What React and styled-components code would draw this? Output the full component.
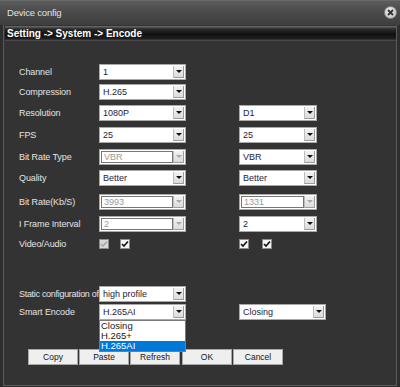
import React from 'react';
import styled, { createGlobalStyle } from 'styled-components';

const GlobalStyle = createGlobalStyle`
    html, body {
        margin: 0;
        padding: 0;
        background: #2e2e2e;
    }
    * {
        box-sizing: border-box;
    }
`;

const font = `"Liberation Sans", Arial, sans-serif`;

const Window = styled.div`
    width: 400px;
    height: 387px;
    display: flex;
    flex-direction: column;
    background: #2e2e2e;
    font-family: ${font};
    font-size: 9px;
`;

const TitleBar = styled.div`
    height: 25px;
    flex: none;
    display: flex;
    align-items: center;
    justify-content: space-between;
    padding: 0 3px 1px 7px;
    background: linear-gradient(#5c5c5c, #4a4a4a 45%, #3e3e3e);
    border-top: 1px solid #6a6a6a;
    color: #e2e2e2;
    font-size: 9.5px;
    letter-spacing: -0.2px;
`;

const CloseButton = styled.div`
    width: 13px;
    height: 13px;
    border-radius: 50%;
    background: radial-gradient(circle at 40% 35%, #f0f0f0, #b8b8b8);
    border: 1px solid #8a8a8a;
    display: flex;
    align-items: center;
    justify-content: center;
`;

const Frame = styled.div`
    flex: 1;
    margin: 0 3px 1px 3px;
    border: 1px solid #5a5a5a;
    border-top: none;
    background: #333333;
    display: flex;
    flex-direction: column;
`;

const Crumb = styled.div`
    height: 15px;
    margin: 1px 0 0 1px;
    padding-left: 2px;
    display: flex;
    align-items: center;
    background: linear-gradient(#6e6e6e, #2a2a2a 20%, #101010 55%, #1e1e1e 85%, #555555);
    color: #ffffff;
    font-weight: bold;
    font-size: 10px;
`;

const Form = styled.div`
    padding: 23px 0 0 15px;
    display: flex;
    flex-direction: column;
`;

const Row = styled.div`
    display: grid;
    grid-template-columns: 80px 140px auto;
    align-items: center;
    height: ${(p) => p.$h || 16}px;
    margin-top: ${(p) => p.$gap || 0}px;
    position: relative;
`;

const Label = styled.div`
    color: #e4e4e4;
    white-space: nowrap;
    letter-spacing: ${(p) => (p.$tight ? -0.3 : -0.1)}px;
`;

const Cell = styled.div`
    display: flex;
    align-items: center;
    gap: ${(p) => p.$gap || 0}px;
`;

const SelectBox = styled.div`
    width: ${(p) => p.$w}px;
    height: 16px;
    display: flex;
    align-items: stretch;
    background: #ffffff;
    border: 1px solid #a9a9a9;
    padding: 1px;
`;

const SelectText = styled.div`
    flex: 1;
    padding-left: 2px;
    line-height: ${(p) => (p.$disabled ? 10 : 12)}px;
    font-size: 9px;
    color: ${(p) => (p.$disabled ? '#9a9a9a' : '#1c1c3a')};
    border: ${(p) => (p.$disabled ? '1px solid #767676' : 'none')};
    white-space: nowrap;
    overflow: hidden;
`;

const ArrowButton = styled.div`
    width: 11px;
    flex: none;
    display: flex;
    align-items: center;
    justify-content: center;
    background: linear-gradient(#f2f2f2, #dcdcdc);
    border-left: 1px solid #bdbdbd;
    border-bottom: 1px solid #9c9c9c;
    border-right: 1px solid #9c9c9c;
`;

const Arrow = styled.div`
    width: 0;
    height: 0;
    border-left: 3px solid transparent;
    border-right: 3px solid transparent;
    border-top: 3px solid ${(p) => (p.$disabled ? '#a8a8a8' : '#111111')};
`;

const CheckBox = styled.div`
    width: 10px;
    height: 10px;
    background: ${(p) => (p.$disabled ? '#d8d8d8' : '#f4f4f4')};
    border: 1px solid #8c8c8c;
    display: flex;
    align-items: center;
    justify-content: center;
`;

const OptionList = styled.div`
    position: absolute;
    left: 80px;
    top: 16px;
    width: 87px;
    background: #ffffff;
    border: 1px solid #7a7a7a;
    z-index: 2;
    display: flex;
    flex-direction: column;
`;

const Option = styled.div`
    height: 10px;
    line-height: 10px;
    padding-left: 1px;
    font-size: 9.5px;
    color: ${(p) => (p.$active ? '#ffffff' : '#1a1a1a')};
    background: ${(p) => (p.$active ? '#0078d7' : 'transparent')};
`;

const ButtonBar = styled.div`
    display: flex;
    gap: 1px;
    margin: 29px 0 0 9px;
`;

const Button = styled.div`
    width: 50px;
    height: 16px;
    display: flex;
    align-items: center;
    justify-content: center;
    background: #efefef;
    border: 1px solid #a8a8a8;
    color: #151515;
    font-size: 8.5px;
    margin-left: ${(p) => p.$gap || 0}px;
`;

const Select = ({ value, w = 87, disabled }) => (
    <SelectBox $w={w}>
        <SelectText $disabled={disabled}>{value}</SelectText>
        <ArrowButton>
            <Arrow $disabled={disabled} />
        </ArrowButton>
    </SelectBox>
);

const Check = ({ disabled }) => (
    <CheckBox $disabled={disabled}>
        <svg width="8" height="8" viewBox="0 0 8 8">
            <path
                d="M1 4 L3 6 L7 1.5"
                fill="none"
                stroke={disabled ? '#a8a8a8' : '#111'}
                strokeWidth="1.6"
            />
        </svg>
    </CheckBox>
);

const rows = [
    { label: 'Channel', left: '1', gap: 0 },
    { label: 'Compression', left: 'H.265', gap: 4 },
    { label: 'Resolution', left: '1080P', right: 'D1', gap: 5 },
    { label: 'FPS', left: '25', right: '25', gap: 6 },
    { label: 'Bit Rate Type', left: 'VBR', right: 'VBR', leftDisabled: true, gap: 6 },
    { label: 'Quality', left: 'Better', right: 'Better', gap: 5 },
    { label: 'Bit Rate(Kb/S)', left: '3993', right: '1331', leftDisabled: true, rightDisabled: true, gap: 8 },
    { label: 'I Frame Interval', left: '2', right: '2', leftDisabled: true, gap: 6 },
];

export default function App() {
    return (
        <>
            <GlobalStyle />
            <Window>
                <TitleBar>
                    <span>Device config</span>
                    <CloseButton>
                        <svg width="7" height="7" viewBox="0 0 7 7">
                            <path d="M1 1 L6 6 M6 1 L1 6" stroke="#333" strokeWidth="1.8" />
                        </svg>
                    </CloseButton>
                </TitleBar>
                <Frame>
                    <Crumb>{'Setting -> System -> Encode'}</Crumb>
                    <Form>
                        {rows.map((r) => (
                            <Row key={r.label} $gap={r.gap}>
                                <Label>{r.label}</Label>
                                <Cell>
                                    <Select value={r.left} disabled={r.leftDisabled} />
                                </Cell>
                                <Cell>
                                    {r.right && <Select value={r.right} w={78} disabled={r.rightDisabled} />}
                                </Cell>
                            </Row>
                        ))}
                        <Row $gap={6} $h={12}>
                            <Label>Video/Audio</Label>
                            <Cell $gap={11}>
                                <Check disabled />
                                <Check />
                            </Cell>
                            <Cell $gap={13}>
                                <Check />
                                <Check />
                            </Cell>
                        </Row>
                        <Row $gap={36}>
                            <Label $tight>Static configuration of</Label>
                            <Cell>
                                <Select value="high profile" />
                            </Cell>
                        </Row>
                        <Row $gap={2}>
                            <Label>Smart Encode</Label>
                            <Cell>
                                <Select value="H.265AI" />
                            </Cell>
                            <Cell>
                                <Select value="Closing" />
                            </Cell>
                            <OptionList>
                                <Option>Closing</Option>
                                <Option>H.265+</Option>
                                <Option $active>H.265AI</Option>
                            </OptionList>
                        </Row>
                        <ButtonBar>
                            <Button>Copy</Button>
                            <Button>Paste</Button>
                            <Button>Refresh</Button>
                            <Button $gap={1}>OK</Button>
                            <Button>Cancel</Button>
                        </ButtonBar>
                    </Form>
                </Frame>
            </Window>
        </>
    );
}
